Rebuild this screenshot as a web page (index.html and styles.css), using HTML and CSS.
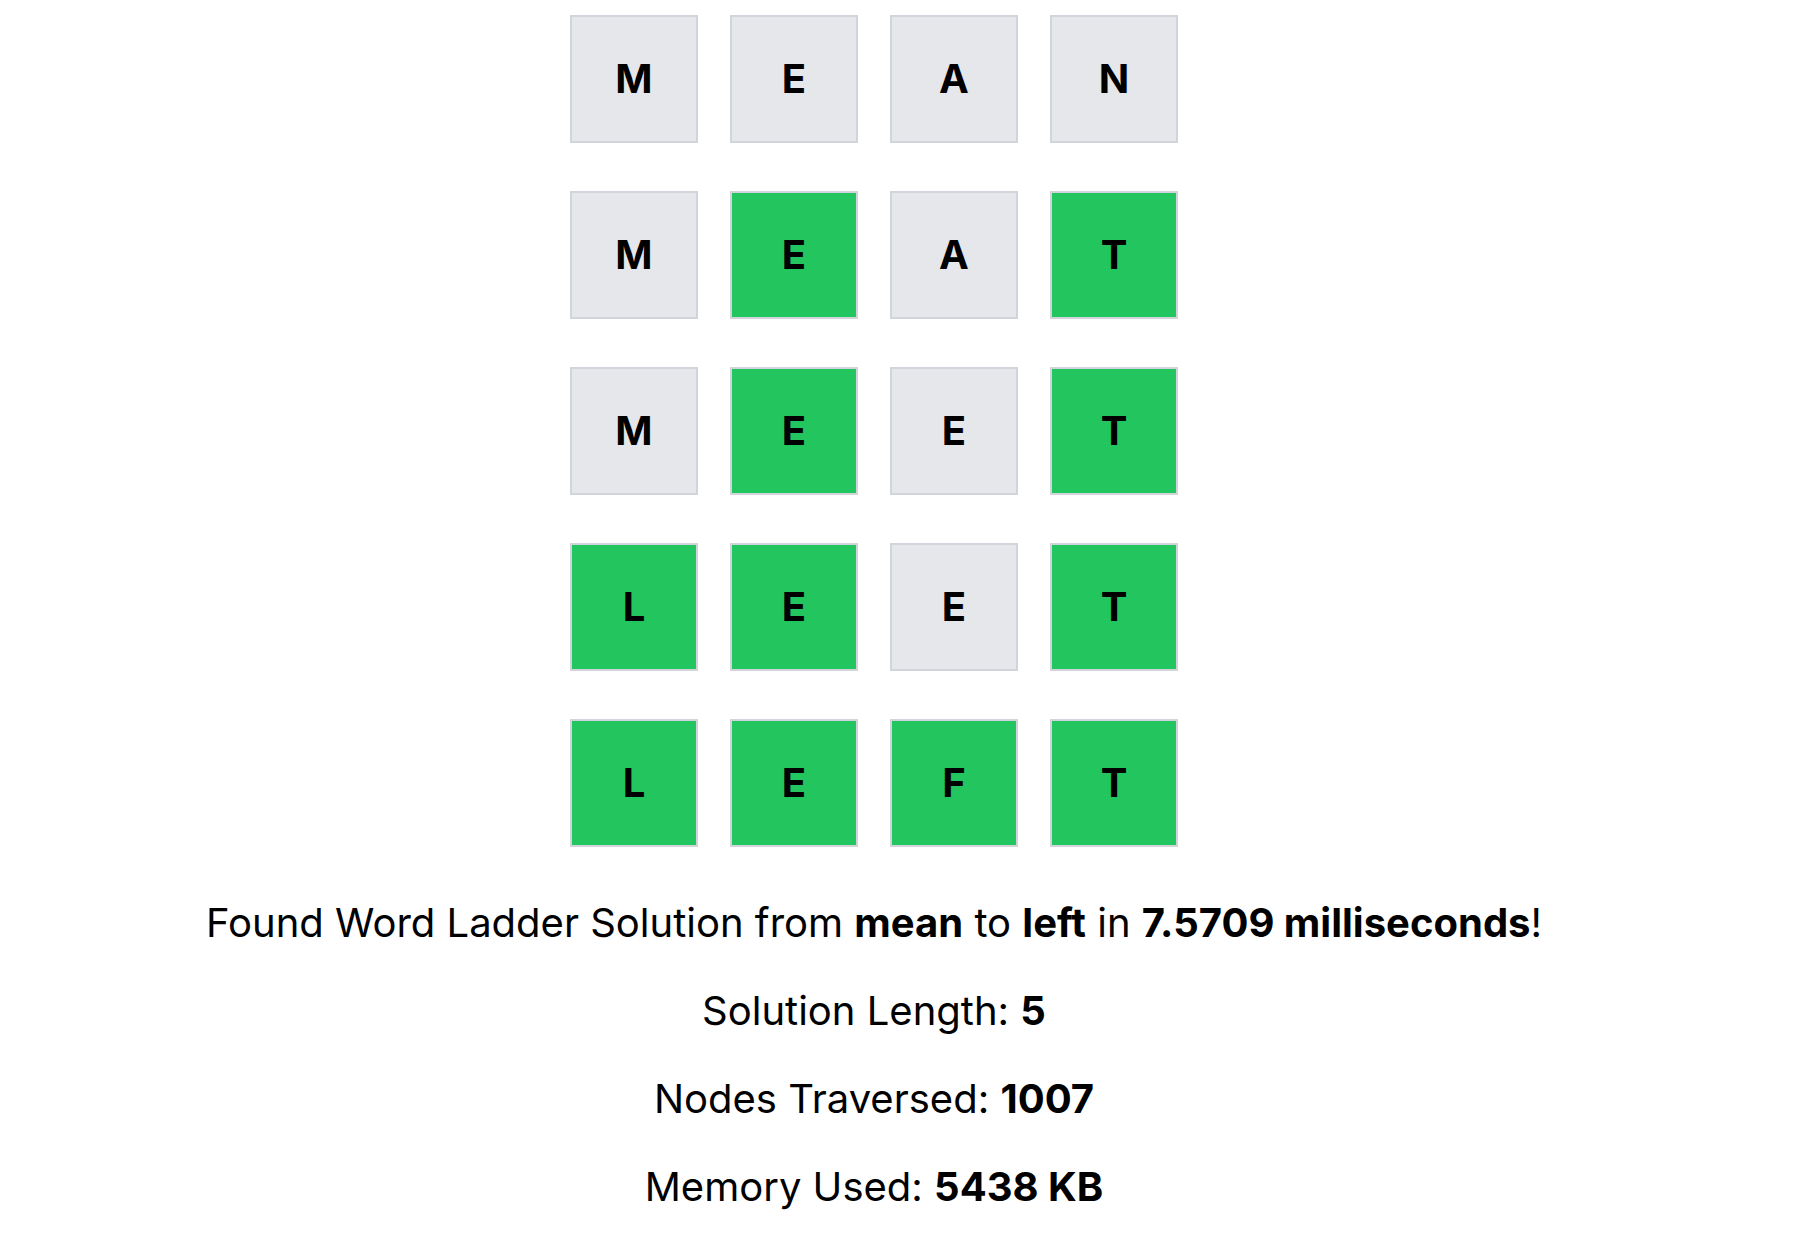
FILE: index.html
```html
<!DOCTYPE html>
<html>
<head>
<meta charset="utf-8">
<link rel="stylesheet" href="styles.css">
</head>
<body>
<main class="page">
  <div class="ladder">
    <div class="row"><div class="tile">M</div><div class="tile">E</div><div class="tile">A</div><div class="tile">N</div></div>
    <div class="row"><div class="tile">M</div><div class="tile on">E</div><div class="tile">A</div><div class="tile on">T</div></div>
    <div class="row"><div class="tile">M</div><div class="tile on">E</div><div class="tile">E</div><div class="tile on">T</div></div>
    <div class="row"><div class="tile on">L</div><div class="tile on">E</div><div class="tile">E</div><div class="tile on">T</div></div>
    <div class="row"><div class="tile on">L</div><div class="tile on">E</div><div class="tile on">F</div><div class="tile on">T</div></div>
  </div>
  <div class="stats">
    <p>Found Word Ladder Solution from <b>mean</b> to <b>left</b> in <b>7.5709 milliseconds</b>!</p>
    <p>Solution Length: <b>5</b></p>
    <p>Nodes Traversed: <b>1007</b></p>
    <p>Memory Used: <b>5438 KB</b></p>
  </div>
</main>
</body>
</html>
```
FILE: styles.css
```css
html, body {
  margin: 0;
  background: #ffffff;
}
body {
  font-family: Inter, "Noto Sans", sans-serif;
  color: #000000;
}
.page {
  width: 1748px;
  padding-top: 15px;
  display: flex;
  flex-direction: column;
  align-items: center;
}
.ladder {
  display: flex;
  flex-direction: column;
  gap: 48px;
}
.row {
  display: flex;
  gap: 32px;
}
.tile {
  box-sizing: border-box;
  width: 128px;
  height: 128px;
  border: 2px solid #d1d5db;
  background: #e5e7eb;
  display: flex;
  align-items: center;
  justify-content: center;
  font-weight: 700;
  font-size: 40px;
  padding-bottom: 2px;
}
.tile.on {
  background: #22c55e;
}
.stats {
  margin-top: 32px;
  text-align: center;
}
.stats p {
  margin: 0;
  font-size: 40px;
  line-height: 88px;
}
.stats b {
  font-weight: 700;
}
```
